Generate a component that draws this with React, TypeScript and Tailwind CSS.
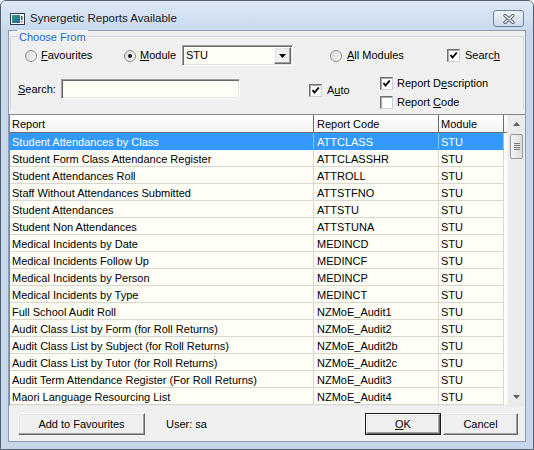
import React from 'react';

interface ReportRow {
  name: string;
  code: string;
  module: string;
}

const reports: ReportRow[] = [
  { name: 'Student Attendances by Class', code: 'ATTCLASS', module: 'STU' },
  { name: 'Student Form Class Attendance Register', code: 'ATTCLASSHR', module: 'STU' },
  { name: 'Student Attendances Roll', code: 'ATTROLL', module: 'STU' },
  { name: 'Staff Without Attendances Submitted', code: 'ATTSTFNO', module: 'STU' },
  { name: 'Student Attendances', code: 'ATTSTU', module: 'STU' },
  { name: 'Student Non Attendances', code: 'ATTSTUNA', module: 'STU' },
  { name: 'Medical Incidents by Date', code: 'MEDINCD', module: 'STU' },
  { name: 'Medical Incidents Follow Up', code: 'MEDINCF', module: 'STU' },
  { name: 'Medical Incidents by Person', code: 'MEDINCP', module: 'STU' },
  { name: 'Medical Incidents by Type', code: 'MEDINCT', module: 'STU' },
  { name: 'Full School Audit Roll', code: 'NZMoE_Audit1', module: 'STU' },
  { name: 'Audit Class List by Form (for Roll Returns)', code: 'NZMoE_Audit2', module: 'STU' },
  { name: 'Audit Class List by Subject (for Roll Returns)', code: 'NZMoE_Audit2b', module: 'STU' },
  { name: 'Audit Class List by Tutor (for Roll Returns)', code: 'NZMoE_Audit2c', module: 'STU' },
  { name: 'Audit Term Attendance Register (For Roll Returns)', code: 'NZMoE_Audit3', module: 'STU' },
  { name: 'Maori Language Resourcing List', code: 'NZMoE_Audit4', module: 'STU' },
];

const Radio = ({ checked }: { checked?: boolean }) => (
  <span className="w-[12px] h-[12px] rounded-full border border-[#8e8f8f] bg-linear-to-br from-[#d8d8d8] to-[#fcfcfc] flex items-center justify-center shrink-0">
    {checked && <span className="w-[4px] h-[4px] rounded-full bg-[#1a1a1a]" />}
  </span>
);

const Check = ({ checked }: { checked?: boolean }) => (
  <span className="w-[13px] h-[13px] border border-[#707070] border-r-[#d0d0d0] border-b-[#d0d0d0] bg-white shadow-[inset_1px_1px_0_#a8a8a8] flex items-center justify-center shrink-0">
    {checked && (
      <svg width="9" height="9" viewBox="0 0 9 9">
        <path d="M1.5 4 L3.5 6.5 L7.8 1.5" fill="none" stroke="#000" strokeWidth="1.9" />
      </svg>
    )}
  </span>
);

const Arrow = ({ down }: { down?: boolean }) => (
  <svg width="7" height="4" viewBox="0 0 7 4">
    <path d={down ? 'M0 0 H7 L3.5 4 Z' : 'M0 4 H7 L3.5 0 Z'} fill="#606060" />
  </svg>
);

const sunken =
  'border border-t-[#a0a0a0] border-l-[#a0a0a0] border-r-white border-b-white shadow-[inset_1px_1px_0_#696969,inset_-1px_-1px_0_#e3e3e3] bg-[#fffef6]';

const raised =
  'border border-t-white border-l-white border-r-[#696969] border-b-[#696969] shadow-[inset_-1px_-1px_0_#a0a0a0,inset_1px_1px_0_#e3e3e3] bg-[#f0f0f0]';

export default function App() {
  return (
    <div className="w-[534px] h-[450px] flex flex-col bg-[#c6d7ec] border border-[#525f70] rounded-t-[6px] overflow-hidden font-['Liberation_Sans',Arial,sans-serif] text-black">
      {/* Title bar */}
      <div className="h-[29px] shrink-0 flex items-start pt-[9px] pl-[9px] pr-[9px] bg-linear-to-b from-[#dfe9f6] to-[#c8d9ee]">
        <svg width="15" height="12" viewBox="0 0 15 12" className="mt-[3px] shrink-0">
          <defs>
            <linearGradient id="ic" x1="0" y1="0" x2="1" y2="1">
              <stop offset="0" stopColor="#2f9a6e" />
              <stop offset="1" stopColor="#2a63b8" />
            </linearGradient>
          </defs>
          <rect x="0.5" y="0.5" width="14" height="11" fill="#fff" stroke="#2d3a4d" />
          <rect x="2" y="2" width="8" height="8" fill="url(#ic)" />
          <rect x="11" y="3" width="1.5" height="4" fill="#3a4a60" />
          <rect x="11" y="8" width="1.5" height="1.5" fill="#c83030" />
        </svg>
        <span className="ml-[5px] text-[11.5px] leading-[16px] text-[#1b1b1b]">Synergetic Reports Available</span>
        <div className="flex-1" />
        <div className="w-[31px] h-[17px] rounded-[3px] border border-[#71819a] bg-linear-to-b from-[#f0f4fa] to-[#cfdaea] flex items-center justify-center">
          <svg width="12" height="10" viewBox="0 0 12 10">
            <path d="M2 1.5 L10 8.5 M10 1.5 L2 8.5" stroke="#4a5668" strokeWidth="3.2" strokeLinecap="round" />
            <path d="M2 1.5 L10 8.5 M10 1.5 L2 8.5" stroke="#fff" strokeWidth="1.5" strokeLinecap="round" />
          </svg>
        </div>
      </div>

      {/* Client area */}
      <div className="mx-[7px] flex-1 flex flex-col border border-[#8c9cb2] bg-[#f0f0f0] text-[11px] leading-[13px]">
        {/* Choose From group */}
        <div className="relative mt-[5px] mx-[1px] border border-b-0 border-[#d2d9e0]">
          <span className="absolute left-[6px] top-[-7px] px-[2px] bg-[#f0f0f0] text-[#1e66d2] leading-[14px]">Choose From</span>

          <div className="mt-[8px] h-[21px] flex items-center pl-[14px]">
            <div className="w-[99px] flex items-center gap-[4px]">
              <Radio />
              <span><u>F</u>avourites</span>
            </div>
            <div className="w-[58px] flex items-center gap-[4px]">
              <Radio checked />
              <span><u>M</u>odule</span>
            </div>
            <div className={`w-[111px] h-[21px] flex items-stretch ${sunken}`}>
              <span className="flex-1 pl-[3px] flex items-center">STU</span>
              <span className={`w-[17px] my-[1px] mr-[1px] flex items-center justify-center ${raised}`}>
                <svg width="7" height="4" viewBox="0 0 7 4">
                  <path d="M0 0 H7 L3.5 4 Z" fill="#000" />
                </svg>
              </span>
            </div>
            <div className="w-[37px]" />
            <div className="w-[117px] flex items-center gap-[5px]">
              <Radio />
              <span><u>A</u>ll Modules</span>
            </div>
            <div className="flex items-center gap-[5px]">
              <Check checked />
              <span>Searc<u>h</u></span>
            </div>
          </div>

          <div className="mt-[11px] h-[32px] flex items-start pl-[7px]">
            <div className="w-[43px] h-[20px] mt-[2px] flex items-center">
              <span><u>S</u>earch:</span>
            </div>
            <div className={`w-[179px] h-[20px] mt-[2px] ${sunken}`} />
            <div className="ml-[69px] w-[71px] mt-[7px] h-[13px] flex items-center gap-[5px]">
              <Check checked />
              <span>A<u>u</u>to</span>
            </div>
            <div className="flex flex-col gap-[6px]">
              <div className="h-[13px] flex items-center gap-[4px]">
                <Check checked />
                <span>Report D<u>e</u>scription</span>
              </div>
              <div className="h-[13px] flex items-center gap-[4px]">
                <Check />
                <span>Report <u>C</u>ode</span>
              </div>
            </div>
          </div>
        </div>

        {/* Report list */}
        <div className="mt-[5px] h-[292px] flex border-t border-l border-b border-t-[#828790] border-l-[#828790] border-b-[#e8e8e8] bg-[#fffef7] overflow-hidden">
          <div className="flex-1 flex flex-col">
            <div className="h-[18px] shrink-0 flex border-b border-[#6d6d6d] bg-linear-to-b from-white to-[#f2f2f2]">
              <div className="w-[304px] border-r border-[#6d6d6d] pl-[2px] pt-[1px] flex items-center">Report</div>
              <div className="w-[125px] border-r border-[#6d6d6d] pl-[3px] pt-[1px] flex items-center">Report Code</div>
              <div className="w-[65px] border-r border-[#6d6d6d] pl-[2px] pt-[1px] flex items-center">Module</div>
            </div>
            {reports.map((r, i) => {
              const sel = i === 0;
              return (
                <div
                  key={r.code}
                  className={`w-[494px] h-[17px] shrink-0 flex border-b ${
                    sel ? 'bg-[#3399ff] text-white border-[#3399ff]' : 'border-[#dad7cf]'
                  }`}
                >
                  <div className={`w-[304px] border-r pl-[2px] pt-[2px] flex items-center whitespace-nowrap ${sel ? 'border-[#8cc4ff]' : 'border-[#dad7cf]'}`}>
                    {r.name}
                  </div>
                  <div className={`w-[125px] border-r pl-[3px] pt-[2px] flex items-center whitespace-nowrap ${sel ? 'border-[#8cc4ff]' : 'border-[#dad7cf]'}`}>
                    {r.code}
                  </div>
                  <div className={`w-[65px] border-r pl-[2px] pt-[2px] flex items-center ${sel ? 'border-[#8cc4ff]' : 'border-[#dad7cf]'}`}>
                    {r.module}
                  </div>
                </div>
              );
            })}
          </div>

          {/* Scrollbar */}
          <div className="w-[18px] shrink-0 flex flex-col bg-[#ececec] border-l border-[#f4f4f4]">
            <div className="h-[17px] flex items-center justify-center">
              <Arrow />
            </div>
            <div className="flex-1 pt-[2px] px-[2px]">
              <div className="h-[25px] rounded-[2px] border border-[#9a9a9a] bg-linear-to-r from-[#f4f4f4] to-[#dcdcdc] flex flex-col items-center justify-center gap-[1px]">
                <span className="w-[6px] h-px bg-[#7a7a7a]" />
                <span className="w-[6px] h-px bg-[#7a7a7a]" />
                <span className="w-[6px] h-px bg-[#7a7a7a]" />
                <span className="w-[6px] h-px bg-[#7a7a7a]" />
              </div>
            </div>
            <div className="h-[17px] flex items-center justify-center">
              <Arrow down />
            </div>
          </div>
        </div>

        {/* Bottom buttons */}
        <div className="mt-[7px] h-[22px] flex items-center">
          <button className={`ml-[9px] w-[127px] h-[22px] flex items-center justify-center ${raised}`}>
            Add to Favourites
          </button>
          <span className="ml-[21px]">User: sa</span>
          <div className="flex-1" />
          <div className="w-[76px] h-[22px] border border-[#1a1a1a]">
            <button className={`w-full h-full flex items-center justify-center ${raised}`}>
              <span><u>O</u>K</span>
            </button>
          </div>
          <button className={`ml-[2px] mr-[7px] w-[75px] h-[22px] flex items-center justify-center ${raised}`}>
            Cancel
          </button>
        </div>
      </div>

      <div className="h-[7px] shrink-0" />
    </div>
  );
}
